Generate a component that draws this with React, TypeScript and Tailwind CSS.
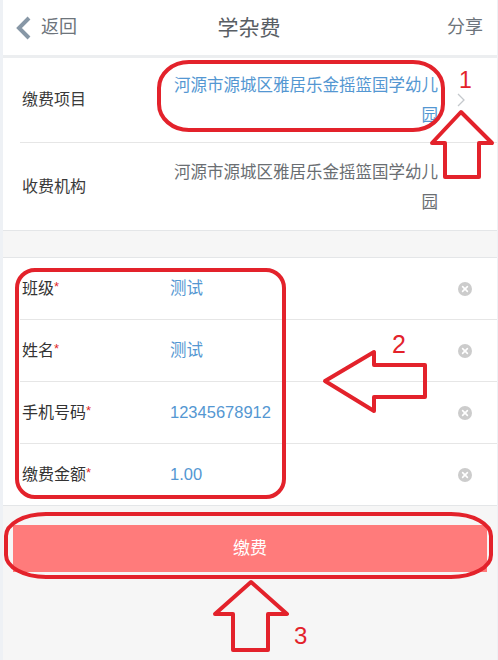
import React from "react";

const font = { fontFamily: '"Liberation Sans", "Noto Sans CJK SC", sans-serif' };

const RED = "#e3222b";

// Clear button inside input rows
const ClearIcon = () => (
  <svg width="14" height="14" viewBox="0 0 14 14">
    <circle cx="7" cy="7" r="7" fill="#cccccc" />
    <path d="M4.6 4.6 L9.4 9.4 M9.4 4.6 L4.6 9.4" stroke="#fff" strokeWidth="1.6" strokeLinecap="round" />
  </svg>
);

const fields = [
  { label: "班级", value: "测试" },
  { label: "姓名", value: "测试" },
  { label: "手机号码", value: "12345678912" },
  { label: "缴费金额", value: "1.00" },
];

// Red hand-drawn marks over the screenshot
const Annotations = () => (
  <svg
    className="pointer-events-none absolute left-0 top-0"
    width="498"
    height="660"
    viewBox="0 0 498 660"
  >
    <g fill="none" stroke={RED} strokeWidth="4" strokeLinejoin="round">
      <rect x="159" y="62" width="284" height="68" rx="30" ry="26" />
      <polygon points="461,112 492,143 479,143 479,177 445,177 445,143 432,143" />
      <rect x="17" y="270" width="267" height="227" rx="18" />
      <polygon points="325,381 374,352 374,365 425,365 425,397 374,397 374,411" />
      <rect x="6" y="514" width="485" height="63" rx="40" ry="22" />
      <polygon points="251,582 287,614 268,614 268,650 233,650 233,614 215,614" />
    </g>
    <g fill={RED} style={{ fontFamily: '"Liberation Sans", sans-serif' }}>
      <text x="459" y="88" fontSize="23">1</text>
      <text x="392" y="353" fontSize="25">2</text>
      <text x="294" y="644" fontSize="24">3</text>
    </g>
  </svg>
);

export default function App() {
  return (
    <div className="relative h-[660px] w-[498px] overflow-hidden bg-[#eef1f5] pl-[3px] pr-[1px]" style={font}>
      <div className="flex h-full flex-col bg-[#f6f6f6]">
        {/* Header */}
        <div className="flex h-[58px] shrink-0 items-center justify-between border-b-[3px] border-[#eceef0] bg-white pl-[12px] pr-[14px]">
          <div className="flex w-[90px] items-center gap-[8px] text-[18px] text-[#6d747b]">
            <svg width="18" height="24" viewBox="0 0 18 24">
              <path d="M14 2 L4 12 L14 22" fill="none" stroke="#8797a6" strokeWidth="4" strokeLinejoin="miter" />
            </svg>
            <span>返回</span>
          </div>
          <div className="text-[21px] text-[#595e64]">学杂费</div>
          <div className="flex w-[90px] justify-end text-[18px] text-[#6d747b]">分享</div>
        </div>

        {/* Payment info */}
        <div className="bg-white">
          <div className="flex h-[84px] items-center pl-[19px]">
            <div className="w-[150px] text-[16px] text-[#3a3a3a]">缴费项目</div>
            <div className="w-[266px] text-right text-[16.5px] leading-[30px] text-[#5497d2]">
              河源市源城区雅居乐金摇篮国学幼儿园
            </div>
            <div className="flex flex-1 justify-start pl-[19px]">
              <svg width="8" height="14" viewBox="0 0 8 14">
                <path d="M1 1 L7 7 L1 13" fill="none" stroke="#c4c8cc" strokeWidth="1.3" />
              </svg>
            </div>
          </div>
          <div className="ml-[17px] h-px bg-[#e6e6e6]" />
          <div className="flex h-[87px] items-center pl-[19px]">
            <div className="w-[150px] text-[16px] text-[#3a3a3a]">收费机构</div>
            <div className="w-[266px] text-right text-[16.5px] leading-[30px] text-[#6a6e72]">
              河源市源城区雅居乐金摇篮国学幼儿园
            </div>
          </div>
        </div>

        <div className="h-[28px] shrink-0 border-y border-[#e4e6e8]" />

        {/* Form fields */}
        <div className="bg-white">
          {fields.map((f, i) => (
            <div key={f.label}>
              {i > 0 && <div className="ml-[17px] h-px bg-[#e6e6e6]" />}
              <div className="flex h-[61px] items-center pl-[19px] pr-[25px]">
                <div className="w-[148px] text-[16px] text-[#333]">
                  {f.label}
                  <span className="relative top-[-3px] text-[13px] text-[#e02a2a]">*</span>
                </div>
                <div className="flex-1 text-[16.5px] text-[#5497d2]">{f.value}</div>
                <ClearIcon />
              </div>
            </div>
          ))}
        </div>
        <div className="h-px shrink-0 bg-[#e4e6e8]" />

        {/* Submit */}
        <div className="mx-[10px] mt-[19px] flex h-[47px] shrink-0 items-center justify-center bg-[#ff7b7b] text-[17px] text-white">
          缴费
        </div>
      </div>
      <Annotations />
    </div>
  );
}
